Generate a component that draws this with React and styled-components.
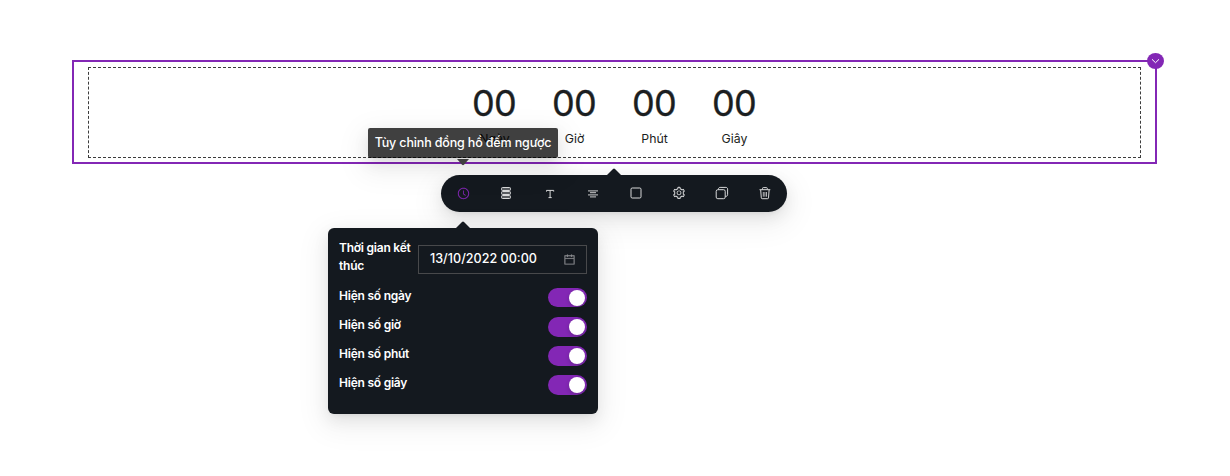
import React from "react";
import styled, { createGlobalStyle } from "styled-components";
import { AiOutlineClockCircle, AiOutlineCalendar, AiOutlineSetting } from "react-icons/ai";

const ink = "#14191f";
const purple = "#8327b5";
const shadow =
  "0 3px 6px -4px rgba(0,0,0,.12), 0 6px 16px rgba(0,0,0,.08), 0 9px 28px 8px rgba(0,0,0,.05)";

const GlobalStyle = createGlobalStyle`
  *, *::before, *::after { box-sizing: border-box; }
  body {
    margin: 0;
    background: #fff;
    color: #1b1e21;
    font-family: Inter, "Liberation Sans", sans-serif;
    overflow: hidden;
  }
`;

const Page = styled.main`
  height: 476px;
  padding: 60px 73px 0 72px;
`;

const Block = styled.section`
  position: relative;
  height: 104px;
  padding: 5px 14px 4px;
  border: 2px solid ${purple};
`;

const Dashed = styled.div`
  display: flex;
  justify-content: center;
  height: 91px;
  padding-top: 12px;
  border: 1px dashed #3c3c3c;
`;

const Unit = styled.div`
  width: 80px;
  text-align: center;
`;

const Digits = styled.div`
  margin-left: -1px;
  font-size: 36px;
  line-height: 46px;
  letter-spacing: -0.7px;
  -webkit-text-stroke: 0.35px currentColor;
`;

const UnitName = styled.div`
  margin-top: 3px;
  font-size: 12.3px;
  line-height: 20px;
`;

const Collapse = styled.button`
  position: absolute;
  top: -9px;
  right: -9px;
  display: grid;
  place-items: center;
  width: 17px;
  height: 16px;
  padding: 0;
  border: 0;
  border-radius: 50%;
  background: ${purple};
  color: #fff;
`;

const Arrow = styled.svg`
  position: absolute;
  top: ${(p) => p.$top};
  left: ${(p) => p.$left}px;
  display: block;
  width: 14px;
  height: 7px;
`;

const Toolbar = styled.nav`
  position: absolute;
  left: 441px;
  top: 175px;
  display: flex;
  align-items: center;
  width: 346px;
  height: 37px;
  border-radius: 19px;
  background: ${ink};
  box-shadow: ${shadow};
`;

const Tool = styled.button`
  display: grid;
  place-items: center;
  width: 43.15px;
  height: 37px;
  padding: 0 0 1px 1px;
  border: 0;
  background: none;
  color: ${(p) => (p.$active ? purple : "#d9dadb")};
  svg { display: block; }
`;

const Tooltip = styled.div`
  position: absolute;
  left: 368px;
  top: 128px;
  width: 190px;
  height: 30px;
  border-radius: 2px;
  background: rgba(0, 0, 0, 0.75);
  box-shadow: ${shadow};
  color: #fff;
  font-size: 12.5px;
  font-weight: 500;
  letter-spacing: -0.15px;
  line-height: 30px;
  text-align: center;
  white-space: nowrap;
`;

const Popover = styled.section`
  position: absolute;
  left: 328px;
  top: 228px;
  width: 270px;
  height: 186px;
  padding: 11px;
  border-radius: 6px;
  background: ${ink};
  box-shadow: ${shadow};
  color: #fff;
`;

const DateRow = styled.div`
  display: flex;
  justify-content: space-between;
  height: 49px;
`;

const Label = styled.label`
  width: ${(p) => (p.$wide ? "auto" : "78px")};
  font-size: 12px;
  font-weight: 600;
  letter-spacing: -0.23px;
  line-height: 18px;
`;

const DateField = styled.div`
  display: flex;
  align-items: center;
  justify-content: space-between;
  width: 169px;
  height: 29px;
  margin-top: 6px;
  padding: 0 10px 1px 11px;
  border: 1px solid #48494b;
  font-size: 12.6px;
  font-weight: 500;
  line-height: 16px;
  svg { color: #8e9093; stroke-width: 12px; }
`;

const SwitchRow = styled.div`
  display: flex;
  justify-content: space-between;
  height: 29.2px;
  ${Label} { margin-top: -1.3px; }
`;

const Switch = styled.button`
  display: flex;
  justify-content: flex-end;
  align-items: center;
  width: 39px;
  height: 19.5px;
  margin-top: -0.2px;
  padding: 0 2px;
  border: 0;
  border-radius: 10px;
  background: ${purple};
  &::after {
    content: "";
    width: 16px;
    height: 16px;
    border-radius: 50%;
    background: #fff;
    box-shadow: 0 2px 4px rgba(0, 35, 11, 0.2);
  }
`;

const Icon = ({ size = 14, children }) => (
  <svg width={size} height={size} viewBox="0 0 14 14" fill="none" stroke="currentColor" strokeWidth="1">
    {children}
  </svg>
);

const ChevronIcon = () => (
  <svg width="9" height="6" viewBox="0 0 9 6" fill="none" stroke="currentColor" strokeWidth="1">
    <path d="M1 1.3 4.5 4.7 8 1.3" />
  </svg>
);

const RowsIcon = () => (
  <Icon>
    <g fill="currentColor" fillOpacity=".35">
      <rect x="2.5" y="1.5" width="9" height="3" rx="1" />
      <rect x="2.5" y="5.5" width="9" height="3" rx="1" />
      <rect x="2.5" y="9.5" width="9" height="3" rx="1" />
    </g>
  </Icon>
);

const TypeIcon = () => (
  <Icon>
    <path d="M4.5 5.6V4.4h7.2v1.2M8.1 4.4v7.2M6.5 11.6h3.2" />
  </Icon>
);

const AlignIcon = () => (
  <Icon>
    <g strokeWidth="1.3" opacity=".75">
      <path d="M3 4.8h10M5 6.7h6M3 8.8h10M5 10.9h6" />
    </g>
  </Icon>
);

const SquareIcon = () => (
  <Icon>
    <rect x="2" y="2" width="10" height="10" rx="1.2" />
  </Icon>
);

const CopyIcon = () => (
  <Icon>
    <rect x="1.2" y="3.7" width="9" height="9" rx="1.6" />
    <path d="M3.5 3.5V3c0-.9.6-1.6 1.6-1.6h5.8c1 0 1.7.7 1.7 1.7v5.6c0 1-.7 1.6-1.6 1.6h-.7" />
  </Icon>
);

const TrashIcon = () => (
  <Icon>
    <path d="M1.5 3.7h10.8M4.5 3.5V2.4c0-.5.3-.8.8-.8h3.2c.5 0 .8.3.8.8v1.1M2.7 4l.6 7.9c0 .5.4.8.9.8h5.4c.5 0 .9-.3.9-.8L11.1 4" />
    <path d="M5.3 6v4.7M6.9 6v4.7M8.5 6v4.7" opacity=".8" />
  </Icon>
);

const units = ["Ngày", "Giờ", "Phút", "Giây"];
const toggles = ["Hiện số ngày", "Hiện số giờ", "Hiện số phút", "Hiện số giây"];
const tools = [
  <AiOutlineClockCircle size={13} />,
  <RowsIcon />,
  <TypeIcon />,
  <AlignIcon />,
  <SquareIcon />,
  <AiOutlineSetting size={14} />,
  <CopyIcon />,
  <TrashIcon />,
];

const Pointer = ({ top, left, down, fill = ink }) => (
  <Arrow $top={top} $left={left} viewBox="0 0 14 7">
    <path d={down ? "M1 0h12L8 5.7q-1 .9-2 0z" : "M0 7 6 1q1-1 2 0l6 6z"} fill={fill} />
  </Arrow>
);

export default function App() {
  return (
    <Page>
      <GlobalStyle />
      <Block>
        <Dashed>
          {units.map((name) => (
            <Unit key={name}>
              <Digits>00</Digits>
              <UnitName>{name}</UnitName>
            </Unit>
          ))}
        </Dashed>
        <Collapse>
          <ChevronIcon />
        </Collapse>
      </Block>
      <Toolbar>
        <Pointer top="-7px" left={166} />
        {tools.map((icon, i) => (
          <Tool key={i} $active={i === 0}>{icon}</Tool>
        ))}
      </Toolbar>
      <Popover>
        <Pointer top="-7px" left={128} />
        <DateRow>
          <Label>Thời gian kết thúc</Label>
          <DateField>
            <span>13/10/2022 00:00</span>
            <AiOutlineCalendar size={13} />
          </DateField>
        </DateRow>
        {toggles.map((name) => (
          <SwitchRow key={name}>
            <Label $wide>{name}</Label>
            <Switch aria-label={name} />
          </SwitchRow>
        ))}
      </Popover>
      <Tooltip>
        Tùy chỉnh đồng hồ đếm ngược
        <Pointer top="31px" left={88} down fill="#404040" />
      </Tooltip>
    </Page>
  );
}
